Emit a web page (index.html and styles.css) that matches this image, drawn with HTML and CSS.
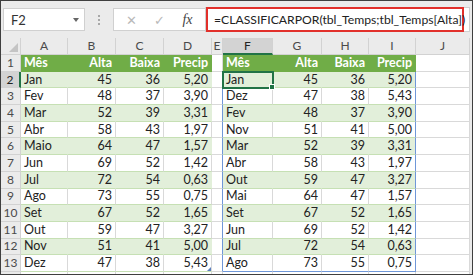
FILE: index.html
```html
<!DOCTYPE html>
<html lang="pt">
<head>
    <meta charset="UTF-8">
    <meta name="viewport" content="width=device-width, initial-scale=1.0">
    <title>CLASSIFICARPOR</title>
    <link rel="stylesheet" href="styles.css">
</head>
<body>
    <div class="window">
        <div class="formula-bar">
            <div class="name-box">
                <span>F2</span>
                <span class="caret"></span>
            </div>
            <div class="grip"><i></i><i></i><i></i></div>
            <div class="fx-buttons">
                <span class="btn off">&#x2715;</span>
                <span class="btn off">&#x2713;</span>
                <span class="btn fx">fx</span>
            </div>
            <div class="formula-input">
                <span class="formula-text">=CLASSIFICARPOR(tbl_Temps;tbl_Temps[Alta])</span>
            </div>
        </div>

        <table class="grid">
            <colgroup>
                <col class="c-hdr">
                <col class="c-a"><col class="c-b"><col class="c-c"><col class="c-d">
                <col class="c-e">
                <col class="c-f"><col class="c-g"><col class="c-h"><col class="c-i">
                <col class="c-j">
            </colgroup>
            <tr class="cols">
                <th class="corner"></th>
                <th>A</th><th>B</th><th>C</th><th>D</th><th>E</th>
                <th class="on">F</th><th>G</th><th>H</th><th>I</th><th>J</th>
            </tr>
            <tr class="head">
                <th>1</th>
                <td class="t">Mês</td><td class="t n">Alta</td><td class="t n">Baixa</td><td class="t n">Precip</td>
                <td class="gap"></td>
                <td class="t">Mês</td><td class="t n">Alta</td><td class="t n">Baixa</td><td class="t n">Precip</td>
                <td class="free"></td>
            </tr>
            <tr class="band">
                <th class="on">2</th>
                <td class="t">Jan</td><td class="t n">45</td><td class="t n">36</td><td class="t n">5,20</td>
                <td class="gap sp"></td>
                <td class="t sel">Jan</td><td class="t n">45</td><td class="t n">36</td><td class="t n sp">5,20</td>
                <td class="free"></td>
            </tr>
            <tr>
                <th>3</th>
                <td class="t">Fev</td><td class="t n">48</td><td class="t n">37</td><td class="t n">3,90</td>
                <td class="gap sp"></td>
                <td class="t">Dez</td><td class="t n">47</td><td class="t n">38</td><td class="t n sp">5,43</td>
                <td class="free"></td>
            </tr>
            <tr class="band">
                <th>4</th>
                <td class="t">Mar</td><td class="t n">52</td><td class="t n">39</td><td class="t n">3,31</td>
                <td class="gap sp"></td>
                <td class="t">Fev</td><td class="t n">48</td><td class="t n">37</td><td class="t n sp">3,90</td>
                <td class="free"></td>
            </tr>
            <tr>
                <th>5</th>
                <td class="t">Abr</td><td class="t n">58</td><td class="t n">43</td><td class="t n">1,97</td>
                <td class="gap sp"></td>
                <td class="t">Nov</td><td class="t n">51</td><td class="t n">41</td><td class="t n sp">5,00</td>
                <td class="free"></td>
            </tr>
            <tr class="band">
                <th>6</th>
                <td class="t">Maio</td><td class="t n">64</td><td class="t n">47</td><td class="t n">1,57</td>
                <td class="gap sp"></td>
                <td class="t">Mar</td><td class="t n">52</td><td class="t n">39</td><td class="t n sp">3,31</td>
                <td class="free"></td>
            </tr>
            <tr>
                <th>7</th>
                <td class="t">Jun</td><td class="t n">69</td><td class="t n">52</td><td class="t n">1,42</td>
                <td class="gap sp"></td>
                <td class="t">Abr</td><td class="t n">58</td><td class="t n">43</td><td class="t n sp">1,97</td>
                <td class="free"></td>
            </tr>
            <tr class="band">
                <th>8</th>
                <td class="t">Jul</td><td class="t n">72</td><td class="t n">54</td><td class="t n">0,63</td>
                <td class="gap sp"></td>
                <td class="t">Out</td><td class="t n">59</td><td class="t n">47</td><td class="t n sp">3,27</td>
                <td class="free"></td>
            </tr>
            <tr>
                <th>9</th>
                <td class="t">Ago</td><td class="t n">73</td><td class="t n">55</td><td class="t n">0,75</td>
                <td class="gap sp"></td>
                <td class="t">Mai</td><td class="t n">64</td><td class="t n">47</td><td class="t n sp">1,57</td>
                <td class="free"></td>
            </tr>
            <tr class="band">
                <th>10</th>
                <td class="t">Set</td><td class="t n">67</td><td class="t n">52</td><td class="t n">1,65</td>
                <td class="gap sp"></td>
                <td class="t">Set</td><td class="t n">67</td><td class="t n">52</td><td class="t n sp">1,65</td>
                <td class="free"></td>
            </tr>
            <tr>
                <th>11</th>
                <td class="t">Out</td><td class="t n">59</td><td class="t n">47</td><td class="t n">3,27</td>
                <td class="gap sp"></td>
                <td class="t">Jun</td><td class="t n">69</td><td class="t n">52</td><td class="t n sp">1,42</td>
                <td class="free"></td>
            </tr>
            <tr class="band">
                <th>12</th>
                <td class="t">Nov</td><td class="t n">51</td><td class="t n">41</td><td class="t n">5,00</td>
                <td class="gap sp"></td>
                <td class="t">Jul</td><td class="t n">72</td><td class="t n">54</td><td class="t n sp">0,63</td>
                <td class="free"></td>
            </tr>
            <tr class="last">
                <th>13</th>
                <td class="t">Dez</td><td class="t n">47</td><td class="t n">38</td><td class="t n resize">5,43</td>
                <td class="gap sp"></td>
                <td class="t spb">Ago</td><td class="t n spb">73</td><td class="t n spb">55</td><td class="t n sp spb">0,75</td>
                <td class="free"></td>
            </tr>
            <tr class="peek">
                <th>14</th>
                <td></td><td></td><td></td><td></td>
                <td class="gap"></td>
                <td></td><td></td><td></td><td></td>
                <td class="free"></td>
            </tr>
        </table>
    </div>
</body>
</html>
```

FILE: styles.css
```css
body {
    margin: 0;
    font-family: Lato, "Open Sans", sans-serif;
    background: #ffffff;
}
.window {
    width: 473px;
    height: 275px;
    box-sizing: border-box;
    border: 1px solid #3f3f3f;
    background: #ebebeb;
    overflow: hidden;
}

/* formula bar */
.formula-bar {
    display: flex;
    align-items: center;
    height: 37px;
    padding-left: 2px;
}
.name-box {
    display: flex;
    align-items: center;
    justify-content: space-between;
    box-sizing: border-box;
    width: 82px;
    height: 23px;
    padding: 0 5px 0 7px;
    background: #ffffff;
    border: 1px solid #d0d0d0;
    font-size: 13px;
    color: #333333;
}
.caret {
    width: 0;
    height: 0;
    border-left: 3px solid transparent;
    border-right: 3px solid transparent;
    border-top: 4px solid #666666;
}
.grip {
    display: flex;
    flex-direction: column;
    gap: 2px;
    width: 28px;
    align-items: center;
}
.grip i {
    width: 2px;
    height: 2px;
    background: #a8a8a8;
}
.fx-buttons {
    display: flex;
    align-items: center;
    justify-content: space-around;
    box-sizing: border-box;
    width: 92px;
    height: 23px;
    padding: 0 4px;
    background: #ffffff;
    border: 1px solid #d0d0d0;
    border-right: none;
}
.btn {
    font-size: 13px;
    color: #b9b9b9;
}
.btn.fx {
    font-family: "Liberation Serif", serif;
    font-style: italic;
    font-size: 14px;
    color: #444444;
}
.formula-input {
    display: flex;
    align-items: center;
    height: 23px;
    flex: 1;
    margin-right: 2px;
    background: #ffffff;
    border: 1px solid #d0d0d0;
}
.formula-text {
    display: block;
    box-sizing: border-box;
    width: 258px;
    height: 25px;
    line-height: 21px;
    padding-left: 6px;
    border: 2px solid #e2302b;
    font-size: 12.2px;
    color: #222222;
    white-space: nowrap;
}

/* sheet grid */
.grid {
    table-layout: fixed;
    border-collapse: separate;
    border-spacing: 0;
    width: 469px;
    background: #ffffff;
    font-size: 12.5px;
    color: #222222;
}
.c-hdr { width: 20px; }
.c-a { width: 47px; }
.c-b, .c-c, .c-d { width: 48px; }
.c-e { width: 11px; }
.c-f { width: 50px; }
.c-g { width: 49px; }
.c-h, .c-i { width: 47px; }
.c-j { width: 54px; }

.grid tr {
    height: 16.7px;
}
.grid tr.cols {
    height: 17px;
}
.grid th, .grid td {
    box-sizing: border-box;
    padding: 0 3px;
    line-height: 14px;
    white-space: nowrap;
    overflow: hidden;
    border-right: 1px solid #d9d9d9;
    border-bottom: 1px solid #d9d9d9;
}
.grid th {
    background: #ebebeb;
    font-weight: normal;
    font-size: 12px;
    color: #4a4a4a;
    text-align: center;
    padding: 0;
    border-color: #d2d2d2;
}
.grid tr.peek th {
    vertical-align: top;
    line-height: 12px;
}
.grid th.on {
    background: #d3d3d3;
    color: #222222;
}
.grid tr.cols th.on {
    border-bottom: 2px solid #217346;
}
.grid tr th.on:first-child {
    border-right: 2px solid #217346;
}
.grid th.corner {
    position: relative;
}
.grid th.corner::after {
    content: "";
    position: absolute;
    right: 2px;
    bottom: 2px;
    border-left: 9px solid transparent;
    border-bottom: 9px solid #c4c4c4;
}

/* excel table style */
.grid td.t {
    border-bottom-color: #c6e0b4;
}
.grid td.n {
    text-align: right;
}
.grid tr.band td.t {
    background: #e2efda;
    border-right-color: #e2efda;
}
.grid tr.head td.t {
    background: #70ad47;
    border-right-color: #70ad47;
    border-bottom-color: #70ad47;
    color: #ffffff;
    font-weight: bold;
}

/* spill range and selection */
.grid td.sp,
.grid tr.band td.sp {
    border-right-color: #6f97d8;
}
.grid td.spb {
    border-bottom-color: #6f97d8;
}
.grid td.sel {
    position: relative;
    overflow: visible;
    outline: 2px solid #217346;
    outline-offset: -1px;
}
.grid td.sel::after {
    content: "";
    position: absolute;
    right: -3px;
    bottom: -3px;
    width: 4px;
    height: 4px;
    background: #217346;
    border: 1px solid #ffffff;
}
.grid td.resize {
    position: relative;
}
.grid td.resize::after {
    content: "";
    position: absolute;
    right: 0;
    bottom: 0;
    border-left: 4px solid transparent;
    border-bottom: 4px solid #5a7fbf;
}
```
